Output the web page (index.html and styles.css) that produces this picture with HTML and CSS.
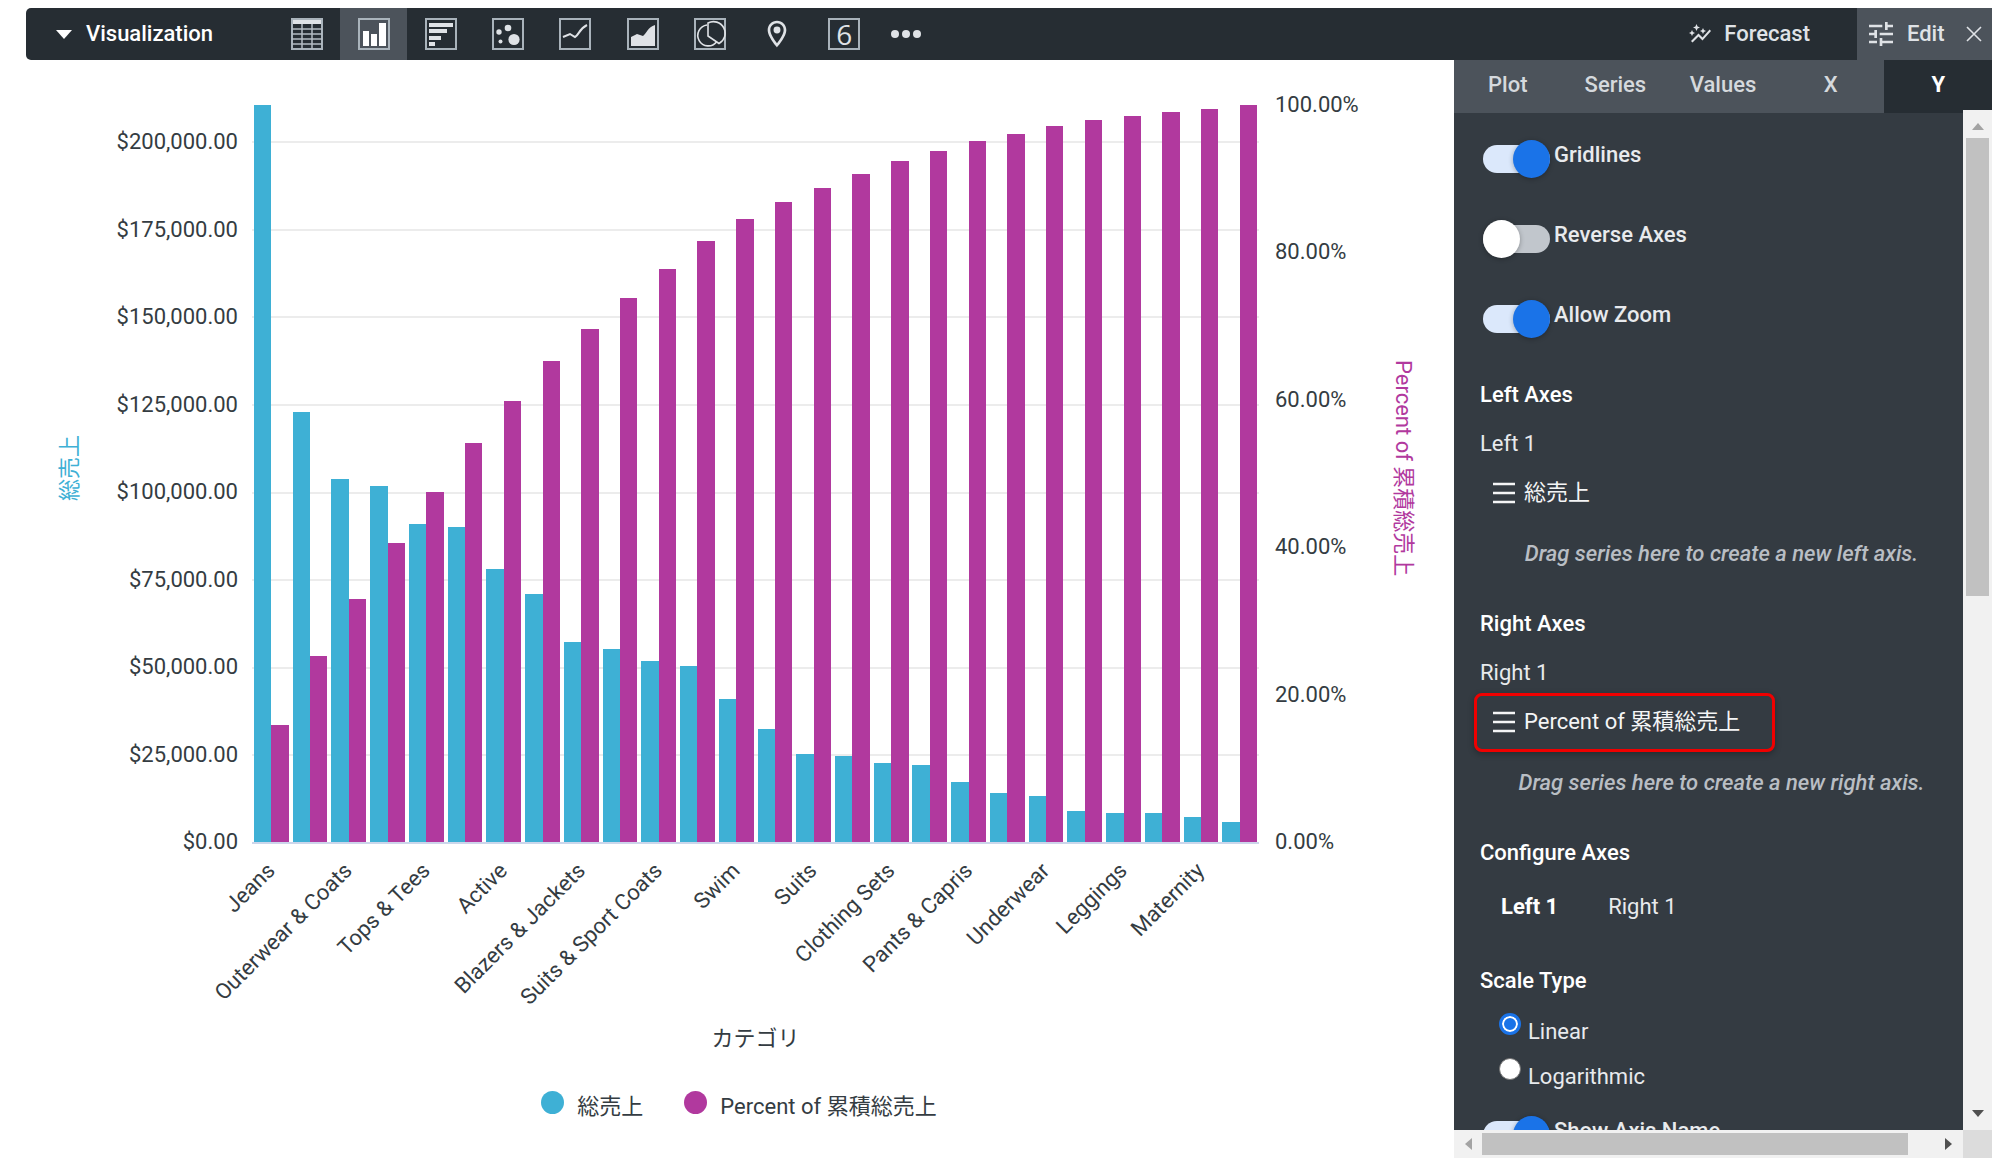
FILE: index.html
```html
<!DOCTYPE html>
<html lang="en">
<head>
<meta charset="utf-8">
<title>Visualization</title>
<link rel="stylesheet" href="styles.css">
</head>
<body>
<div class="app">
  <header class="topbar">
    <button class="collapse" type="button">
      <svg width="16" height="9" viewBox="0 0 16 9"><path d="M0 0h16L8 9z" fill="currentColor"/></svg>
      Visualization
    </button>
    <div class="chart-types">
      <button class="chart-type" type="button" aria-label="Table">
        <svg width="32" height="32" viewBox="0 0 32 32"><path d="M1 1h30v30H1z" class="frame"/><path d="M2 2h28v4H2z" class="fill"/><path d="M1 11h30M1 16h30M1 21h30M1 26h30M11 6v25M21 6v25" class="thin"/></svg>
      </button>
      <button class="chart-type is-active" type="button" aria-label="Column">
        <svg width="32" height="32" viewBox="0 0 32 32"><path d="M1 1h30v30H1z" class="frame"/><path d="M5 13h6v15H5zM13 16h6v12h-6zM21 5h7v23h-7z" class="fill"/></svg>
      </button>
      <button class="chart-type" type="button" aria-label="Bar">
        <svg width="32" height="32" viewBox="0 0 32 32"><path d="M1 1h30v30H1z" class="frame"/><path d="M4 5h24v4H4zM4 11h18v4H4zM4 18h12v4H4zM4 24h6v4H4z" class="fill"/></svg>
      </button>
      <button class="chart-type" type="button" aria-label="Scatter">
        <svg width="32" height="32" viewBox="0 0 32 32"><path d="M1 1h30v30H1z" class="frame"/><g class="fill"><circle cx="7" cy="14" r="2.7"/><circle cx="16" cy="10" r="3.3"/><circle cx="8.500" cy="23.500" r="2"/><circle cx="22" cy="21.500" r="5.600"/></g></svg>
      </button>
      <button class="chart-type" type="button" aria-label="Line">
        <svg width="32" height="32" viewBox="0 0 32 32"><path d="M1 1h30v30H1z" class="frame"/><path d="M4 19l7-3 5 3c4-2 4-8 12-12" class="line"/></svg>
      </button>
      <button class="chart-type" type="button" aria-label="Area">
        <svg width="32" height="32" viewBox="0 0 32 32"><path d="M1 1h30v30H1z" class="frame"/><path d="M4 19l6-3 6 2c3-2 5-9 12-11v21H4z" class="fill"/></svg>
      </button>
      <button class="chart-type" type="button" aria-label="Pie">
        <svg width="32" height="32" viewBox="0 0 32 32"><path d="M1 1h30v30H1z" class="frame"/><path d="M13 7A10.500 10.500 0 1 0 22.500 24" class="pie"/><path d="M14 5v13l11 7.500A11.500 11.500 0 0 0 14 5z" class="pie"/></svg>
      </button>
      <button class="chart-type" type="button" aria-label="Map">
        <svg width="32" height="32" viewBox="0 0 24 24"><path fill="currentColor" d="M12 2C8.130 2 5 5.130 5 9c0 5.250 7 13 7 13s7-7.750 7-13c0-3.870-3.130-7-7-7zM7 9c0-2.760 2.240-5 5-5s5 2.240 5 5c0 2.880-2.880 7.190-5 9.880C9.920 16.210 7 11.850 7 9z"/><circle cx="12" cy="9" r="2.600" fill="currentColor"/></svg>
      </button>
      <button class="chart-type" type="button" aria-label="Single value">
        <span class="single-value">6</span>
      </button>
    </div>
    <button class="more" type="button" aria-label="More chart types">
      <svg width="30" height="8" viewBox="0 0 30 8"><g fill="currentColor"><circle cx="4" cy="4" r="4"/><circle cx="15" cy="4" r="4"/><circle cx="26" cy="4" r="4"/></g></svg>
    </button>
    <button class="forecast" type="button">
      <svg width="24" height="24" viewBox="0 0 24 24"><path fill="currentColor" d="M14.060 9.940L12 9l2.060-.94L15 6l.94 2.060L18 9l-2.060.94L15 12l-.94-2.060zM4 14l.94-2.060L7 11l-2.060-.94L4 8l-.94 2.060L1 11l2.060.94L4 14zm4.500-5l1.090-2.410L12 5.500 9.590 4.410 8.500 2 7.410 4.410 5 5.500l2.410 1.090L8.500 9zm-4 11.500l6-6.010 4 4L23 8.930l-1.410-1.410-7.090 7.970-4-4L3 19l1.500 1.500z"/></svg>
      Forecast
    </button>
    <div class="edit">
      <button class="edit-main" type="button">
        <svg width="32" height="32" viewBox="0 0 24 24"><path fill="currentColor" d="M3 17v2h6v-2H3zM3 5v2h10V5H3zm10 16v-2h8v-2h-8v-2h-2v6h2zM7 9v2H3v2h4v2h2V9H7zm14 4v-2H11v2h10zm-6-4h2V7h4V5h-4V3h-2v6z"/></svg>
        Edit
      </button>
      <button class="edit-close" type="button" aria-label="Close">
        <svg width="16" height="16" viewBox="0 0 16 16"><path d="M1 1l14 14M15 1L1 15" fill="none" stroke="currentColor" stroke-width="1.600"/></svg>
      </button>
    </div>
  </header>

  <main class="workspace">
    <section class="chart" aria-label="Chart">
      <div class="chart-body">
        <div class="axis-title axis-title-left">総売上</div>
        <div class="ticks ticks-left">
          <span>$200,000.00</span><span>$175,000.00</span><span>$150,000.00</span><span>$125,000.00</span><span>$100,000.00</span><span>$75,000.00</span><span>$50,000.00</span><span>$25,000.00</span><span>$0.00</span>
        </div>
        <div class="plot">
          <div class="gridlines"><i></i><i></i><i></i><i></i><i></i><i></i><i></i><i></i><i class="baseline"></i></div>
          <div class="bars">
            <div class="pair"><b style="height:100%"></b><b style="height:15.9%"></b></div>
            <div class="pair"><b style="height:58.4%"></b><b style="height:25.2%"></b></div>
            <div class="pair"><b style="height:49.3%"></b><b style="height:33%"></b></div>
            <div class="pair"><b style="height:48.3%"></b><b style="height:40.6%"></b></div>
            <div class="pair"><b style="height:43.2%"></b><b style="height:47.5%"></b></div>
            <div class="pair"><b style="height:42.7%"></b><b style="height:54.1%"></b></div>
            <div class="pair"><b style="height:37.1%"></b><b style="height:59.9%"></b></div>
            <div class="pair"><b style="height:33.6%"></b><b style="height:65.2%"></b></div>
            <div class="pair"><b style="height:27.2%"></b><b style="height:69.6%"></b></div>
            <div class="pair"><b style="height:26.2%"></b><b style="height:73.8%"></b></div>
            <div class="pair"><b style="height:24.5%"></b><b style="height:77.7%"></b></div>
            <div class="pair"><b style="height:23.9%"></b><b style="height:81.5%"></b></div>
            <div class="pair"><b style="height:19.4%"></b><b style="height:84.5%"></b></div>
            <div class="pair"><b style="height:15.3%"></b><b style="height:86.8%"></b></div>
            <div class="pair"><b style="height:12%"></b><b style="height:88.8%"></b></div>
            <div class="pair"><b style="height:11.7%"></b><b style="height:90.6%"></b></div>
            <div class="pair"><b style="height:10.7%"></b><b style="height:92.4%"></b></div>
            <div class="pair"><b style="height:10.5%"></b><b style="height:93.8%"></b></div>
            <div class="pair"><b style="height:8.2%"></b><b style="height:95.1%"></b></div>
            <div class="pair"><b style="height:6.7%"></b><b style="height:96.1%"></b></div>
            <div class="pair"><b style="height:6.2%"></b><b style="height:97.2%"></b></div>
            <div class="pair"><b style="height:4.2%"></b><b style="height:98%"></b></div>
            <div class="pair"><b style="height:3.9%"></b><b style="height:98.5%"></b></div>
            <div class="pair"><b style="height:3.9%"></b><b style="height:99%"></b></div>
            <div class="pair"><b style="height:3.4%"></b><b style="height:99.5%"></b></div>
            <div class="pair"><b style="height:2.7%"></b><b style="height:100%"></b></div>
          </div>
        </div>
        <div class="ticks ticks-right">
          <span>100.00%</span><span>80.00%</span><span>60.00%</span><span>40.00%</span><span>20.00%</span><span>0.00%</span>
        </div>
        <div class="axis-title axis-title-right">Percent of 累積総売上</div>
        <div class="categories">
          <div><span>Jeans</span></div>
          <div><span>Outerwear &amp; Coats</span></div>
          <div><span>Tops &amp; Tees</span></div>
          <div><span>Active</span></div>
          <div><span>Blazers &amp; Jackets</span></div>
          <div><span>Suits &amp; Sport Coats</span></div>
          <div><span>Swim</span></div>
          <div><span>Suits</span></div>
          <div><span>Clothing Sets</span></div>
          <div><span>Pants &amp; Capris</span></div>
          <div><span>Underwear</span></div>
          <div><span>Leggings</span></div>
          <div><span>Maternity</span></div>
        </div>
        <div class="category-title">カテゴリ</div>
      </div>
      <ul class="legend">
        <li class="legend-sales">総売上</li>
        <li class="legend-percent">Percent of 累積総売上</li>
      </ul>
    </section>

    <aside class="panel">
      <nav class="tabs">
        <button type="button">Plot</button>
        <button type="button">Series</button>
        <button type="button">Values</button>
        <button type="button">X</button>
        <button type="button" class="is-active">Y</button>
      </nav>
      <form class="options">
        <label class="toggle"><input type="checkbox" checked><span>Gridlines</span></label>
        <label class="toggle"><input type="checkbox"><span>Reverse Axes</span></label>
        <label class="toggle"><input type="checkbox" checked><span>Allow Zoom</span></label>

        <section class="axes">
          <h3>Left Axes</h3>
          <p class="axis-name">Left 1</p>
          <div class="series">
            <svg width="22" height="22" viewBox="0 0 22 22"><path d="M0 2h22M0 11h22M0 20h22" stroke="currentColor" stroke-width="2.500"/></svg>
            <span>総売上</span>
          </div>
          <p class="drop-hint">Drag series here to create a new left axis.</p>
        </section>
        <section class="axes">
          <h3>Right Axes</h3>
          <p class="axis-name">Right 1</p>
          <div class="series is-marked">
            <svg width="22" height="22" viewBox="0 0 22 22"><path d="M0 2h22M0 11h22M0 20h22" stroke="currentColor" stroke-width="2.500"/></svg>
            <span>Percent of 累積総売上</span>
          </div>
          <p class="drop-hint">Drag series here to create a new right axis.</p>
        </section>

        <h3 class="configure-title">Configure Axes</h3>
        <div class="axis-tabs">
          <button type="button" class="is-active">Left 1</button>
          <button type="button">Right 1</button>
        </div>

        <fieldset class="scale">
          <legend>Scale Type</legend>
          <label><input type="radio" name="scale" checked><span>Linear</span></label>
          <label><input type="radio" name="scale"><span>Logarithmic</span></label>
        </fieldset>
        <label class="toggle toggle-name"><input type="checkbox" checked><span>Show Axis Name</span></label>
      </form>
      <div class="scroll-y" aria-hidden="true">
        <svg width="12" height="7" viewBox="0 0 12 7"><path d="M0 7h12L6 0z" fill="#a3a3a3"/></svg>
        <div class="track"><div class="thumb"></div></div>
        <svg width="12" height="7" viewBox="0 0 12 7"><path d="M0 0h12L6 7z" fill="#505050"/></svg>
      </div>
      <div class="scroll-x" aria-hidden="true">
        <svg width="7" height="12" viewBox="0 0 7 12"><path d="M7 0v12L0 6z" fill="#a3a3a3"/></svg>
        <div class="track"><div class="thumb"></div></div>
        <svg width="7" height="12" viewBox="0 0 7 12"><path d="M0 0v12l7-6z" fill="#505050"/></svg>
      </div>
      <div class="scroll-corner" aria-hidden="true"></div>
    </aside>
  </main>
</div>
</body>
</html>
```
FILE: styles.css
```css
:root {
  --bar: #262d33;
  --raised: #4c535b;
  --panel: #343b42;
  --ink: #343c42;
  --light: #e8eaed;
  --blue: #3eb0d5;
  --magenta: #b1399e;
  --accent: #1a73e8;
}

* { box-sizing: border-box; }

body {
  margin: 0;
  background: #fff;
  color: var(--ink);
  font: 22px/30px Roboto, "Noto Sans CJK JP", sans-serif;
}

button {
  padding: 0;
  border: 0;
  background: none;
  color: inherit;
  font: inherit;
  cursor: pointer;
}

h3, p, ul, fieldset, legend { margin: 0; padding: 0; border: 0; }

svg { display: block; flex: none; }

.app {
  display: flex;
  flex-direction: column;
  height: 100vh;
  padding: 8px 8px 10px 26px;
}

/* Top bar */
.topbar {
  display: flex;
  flex: none;
  height: 52px;
  border-radius: 5px 0 0 5px;
  background: var(--bar);
  color: #dfe2e6;
}

.collapse {
  display: flex;
  align-items: center;
  gap: 14px;
  width: 247px;
  padding-left: 30px;
  color: #fff;
  font-weight: 500;
}

.chart-types {
  display: grid;
  grid-template-columns: repeat(9, 1fr);
  width: 605px;
}

.chart-type { display: grid; place-items: center; }
.chart-type.is-active { background: var(--raised); color: #fff; }

.frame { fill: none; stroke: #a9b3bb; stroke-width: 2; }
.fill { fill: currentColor; }
.thin { fill: none; stroke: #b4bcc3; stroke-width: 1.5; }
.line { fill: none; stroke: currentColor; stroke-width: 2; }
.pie { fill: none; stroke: currentColor; stroke-width: 1.6; }

.single-value {
  width: 32px;
  height: 32px;
  border: 2px solid #a9b3bb;
  font: 28px/28px "Open Sans", sans-serif;
}

.more { display: grid; place-items: center; width: 56px; }

.forecast {
  display: flex;
  align-items: center;
  gap: 12px;
  margin-left: auto;
  padding-right: 47px;
  font-weight: 500;
}

.edit {
  display: flex;
  justify-content: space-between;
  width: 135px;
  padding: 0 9px 0 8px;
  background: var(--raised);
}

.edit-main { display: flex; align-items: center; gap: 10px; font-weight: 500; }
.edit-close { display: grid; place-items: center; width: 18px; }

.workspace { display: flex; flex: 1; min-height: 0; }

/* Chart */
.chart {
  display: flex;
  flex: 1;
  flex-direction: column;
  min-width: 0;
  padding: 45px 0 39px;
  line-height: 24px;
}

.chart-body {
  display: grid;
  flex: 1;
  grid-template-columns: 88px 138px minmax(0, 1fr) 132px 63px;
  grid-template-rows: minmax(0, 1fr) 185px 24px;
}

.axis-title {
  align-self: center;
  margin-bottom: 10px;
  writing-mode: vertical-rl;
  text-orientation: sideways;
  white-space: nowrap;
}

.axis-title-left {
  justify-self: center;
  color: var(--blue);
  transform: rotate(180deg);
}

.axis-title-right { justify-self: start; color: var(--magenta); }

.ticks {
  display: flex;
  flex-direction: column;
  justify-content: space-between;
  margin: -12px 0;
}

.ticks-left { padding: 37px 14px 0 0; text-align: right; }
.ticks-right { padding-left: 16px; }

.plot { position: relative; }

.gridlines {
  position: absolute;
  inset: 36px 0 -2px;
  display: flex;
  flex-direction: column;
  justify-content: space-between;
}

.gridlines i { height: 2px; background: #ececec; }
.gridlines .baseline { background: #ccd6eb; }

.bars { position: relative; display: flex; height: 100%; }

.pair {
  display: flex;
  flex: 1;
  align-items: flex-end;
  padding: 0 2px;
}

.pair b { flex: 1; background: var(--blue); }
.pair b + b { background: var(--magenta); }

.categories {
  display: grid;
  grid-column: 3;
  grid-row: 2;
  grid-template-columns: repeat(13, minmax(0, 1fr));
  padding-top: 13px;
}

.categories div {
  display: flex;
  justify-content: flex-end;
  width: 25%;
  height: 24px;
}

.categories span {
  flex: none;
  white-space: nowrap;
  transform: rotate(-45deg);
  transform-origin: 100% 50%;
}

.category-title { grid-column: 3; grid-row: 3; text-align: center; }

.legend {
  display: flex;
  gap: 41px;
  justify-content: center;
  margin-top: 44px;
  padding-right: 2px;
  list-style: none;
}

.legend li { display: flex; gap: 13px; }

.legend li::before {
  width: 23px;
  height: 23px;
  margin-top: -4px;
  border-radius: 50%;
  background: var(--blue);
  content: "";
}

.legend .legend-percent::before { background: var(--magenta); }

/* Options panel */
.panel {
  display: grid;
  flex: none;
  grid-template-columns: minmax(0, 1fr) 29px;
  grid-template-rows: 53px minmax(0, 1fr) 28px;
  width: 538px;
  background: var(--panel);
  color: var(--light);
}

.tabs {
  display: grid;
  grid-column: 1 / 3;
  grid-template-columns: repeat(5, 1fr);
  background: var(--raised);
  color: #d5d9dd;
}

.tabs button { padding-bottom: 3px; font-weight: 500; }
.tabs .is-active { background: var(--bar); color: #fff; font-weight: 700; }

.options { overflow: hidden; padding: 27px 0 0 26px; }

.toggle {
  display: flex;
  gap: 4px;
  margin: 0 0 42px 3px;
  font-weight: 500;
}

.toggle input {
  position: relative;
  flex: none;
  width: 67px;
  height: 38px;
  margin: 0;
  appearance: none;
}

.toggle input::before {
  position: absolute;
  inset: 5px 0;
  border-radius: 14px;
  background: #c1c6cc;
  content: "";
}

.toggle input::after {
  position: absolute;
  inset: 0 30px 0 0;
  border-radius: 50%;
  background: #fff;
  box-shadow: 0 1px 5px rgba(0, 0, 0, .3);
  content: "";
}

.toggle input:checked::before { background: #dbe8fb; }
.toggle input:checked::after { inset: 0 0 0 30px; background: var(--accent); }

h3, .scale legend { color: #fff; font-size: 22px; font-weight: 500; }

.axes { margin-bottom: 40px; }
.axis-name { margin: 19px 0; }

.series {
  position: relative;
  display: flex;
  gap: 9px;
  align-items: center;
  width: fit-content;
  height: 30px;
  margin-left: 13px;
  color: #f4f5f6;
}

.series.is-marked::after {
  position: absolute;
  inset: -14px -35px -15px -19px;
  border: 3px solid #f00000;
  border-radius: 8px;
  box-shadow: 0 2px 6px rgba(0, 0, 0, .3);
  content: "";
}

.drop-hint {
  margin-top: 31px;
  color: #b9bec4;
  font-style: italic;
  font-weight: 500;
  text-align: center;
  white-space: nowrap;
}

.axis-tabs { display: flex; gap: 50px; margin: 24px 0 44px 21px; }
.axis-tabs .is-active { color: #fff; font-weight: 700; }

.scale legend { margin-bottom: 17px; }

.scale label {
  display: flex;
  gap: 7px;
  height: 34px;
  margin: 0 0 11px 19px;
}

.scale span { margin-top: 4px; }

.scale input {
  flex: none;
  width: 22px;
  height: 22px;
  margin: 0;
  border: 1px solid #767676;
  border-radius: 50%;
  background: #fff;
  appearance: none;
}

.scale input:checked {
  border: 3px solid var(--accent);
  background: var(--accent);
  box-shadow: inset 0 0 0 2px #fff;
}

.toggle-name { margin-top: 13px; }

.scroll-y, .scroll-x {
  display: flex;
  align-items: center;
  justify-content: space-between;
  background: #f1f1f1;
}

.scroll-y { z-index: 1; flex-direction: column; margin-top: -3px; padding: 13px 0; }
.scroll-x { padding: 0 11px; }
.track { flex: 1; }
.scroll-y .track { width: 23px; margin: 8px 0; }
.scroll-x .track { height: 22px; margin: 0 10px; }
.thumb { background: #c1c1c1; }
.scroll-y .thumb { height: 47.5%; }
.scroll-x .thumb { width: 94%; height: 100%; }
.scroll-corner { background: #dcdcdc; }
```
